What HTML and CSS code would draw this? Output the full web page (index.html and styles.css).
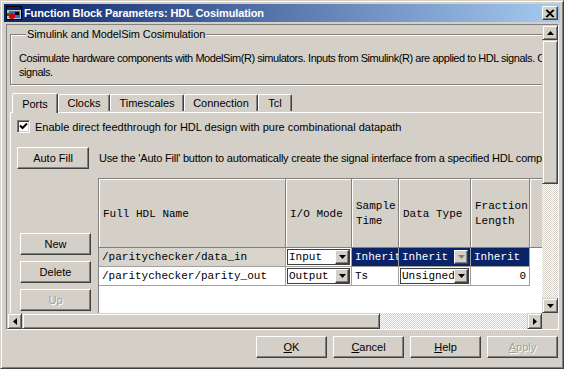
FILE: index.html
```html
<!DOCTYPE html>
<html lang="en">
<head>
    <meta charset="UTF-8">
    <title>Function Block Parameters: HDL Cosimulation</title>
    <link rel="stylesheet" href="styles.css">
</head>
<body>
    <div class="window">
        <div class="titlebar">
            <svg class="app-icon" viewBox="0 0 16 16">
                <rect x="0.5" y="1.5" width="15" height="13" fill="#c0c0c0" stroke="#000"/>
                <rect x="1" y="2" width="14" height="3" fill="#0a246a"/>
                <rect x="3" y="6" width="11" height="7" fill="#2f6fd0"/>
                <rect x="9" y="7" width="4" height="3" fill="#000"/>
                <circle cx="6" cy="11" r="3" fill="#e00000"/>
                <rect x="1" y="8" width="2" height="3" fill="#008000"/>
            </svg>
            <span class="title">Function Block Parameters: HDL Cosimulation</span>
            <div class="close-btn">
                <svg viewBox="0 0 10 9" width="10" height="9"><path d="M1 1 L8 8 M2 1 L9 8 M8 1 L1 8 M9 1 L2 8" stroke="#000" stroke-width="1.1"/></svg>
            </div>
        </div>

        <div class="pane">
            <div class="viewport">
                <div class="content">
                    <fieldset class="group">
                        <legend>Simulink and ModelSim Cosimulation</legend>
                        <p class="desc">Cosimulate hardware components with ModelSim(R) simulators. Inputs from Simulink(R) are applied to HDL signals. C</p>
                        <p class="desc">signals.</p>
                    </fieldset>

                    <div class="tabs">
                        <div class="tab active tab-ports">Ports</div>
                        <div class="tab tab-clocks">Clocks</div>
                        <div class="tab tab-wide">Timescales</div>
                        <div class="tab tab-wide">Connection</div>
                        <div class="tab tab-tcl">Tcl</div>
                    </div>

                    <div class="tab-panel">
                        <label class="check-row">
                            <span class="checkbox">
                                <svg viewBox="0 0 9 9" width="9" height="9"><path d="M1 3.5 L3.5 6 L8 1.5" fill="none" stroke="#000" stroke-width="2"/></svg>
                            </span>
                            Enable direct feedthrough for HDL design with pure combinational datapath
                        </label>

                        <div class="autofill-row">
                            <button class="btn btn-autofill">Auto Fill</button>
                            <span class="hint">Use the 'Auto Fill' button to automatically create the signal interface from a specified HDL component.</span>
                        </div>

                        <div class="ports">
                            <div class="port-buttons">
                                <button class="btn">New</button>
                                <button class="btn">Delete</button>
                                <button class="btn disabled">Up</button>
                            </div>

                            <div class="port-table">
                                <div class="grid">
                                    <div class="hcell">Full HDL Name</div>
                                    <div class="hcell">I/O Mode</div>
                                    <div class="hcell">Sample<br>Time</div>
                                    <div class="hcell">Data Type</div>
                                    <div class="hcell">Fraction<br>Length</div>
                                    <div class="hcell hfill"></div>

                                    <div class="cell cell-gray">/paritychecker/data_in</div>
                                    <div class="cell cell-combo">
                                        <div class="combo"><span>Input</span><i class="drop"><svg viewBox="0 0 7 4" width="7" height="4"><path d="M0 0 H7 L3.5 4 Z"/></svg></i></div>
                                    </div>
                                    <div class="cell selected">Inherit</div>
                                    <div class="cell selected cell-combo">
                                        <div class="combo combo-off"><span>Inherit</span><i class="drop"><svg viewBox="0 0 7 4" width="7" height="4"><path d="M0 0 H7 L3.5 4 Z" fill="#808080"/></svg></i></div>
                                    </div>
                                    <div class="cell selected">Inherit</div>
                                    <div class="cell fill"></div>

                                    <div class="cell">/paritychecker/parity_out</div>
                                    <div class="cell cell-combo">
                                        <div class="combo"><span>Output</span><i class="drop"><svg viewBox="0 0 7 4" width="7" height="4"><path d="M0 0 H7 L3.5 4 Z"/></svg></i></div>
                                    </div>
                                    <div class="cell">Ts</div>
                                    <div class="cell cell-combo">
                                        <div class="combo"><span>Unsigned</span><i class="drop"><svg viewBox="0 0 7 4" width="7" height="4"><path d="M0 0 H7 L3.5 4 Z"/></svg></i></div>
                                    </div>
                                    <div class="cell num">0</div>
                                    <div class="cell fill"></div>
                                </div>
                            </div>
                        </div>
                    </div>
                </div>
            </div>

            <!-- vertical scrollbar -->
            <div class="vscroll">
                <div class="arrow"><svg viewBox="0 0 7 4" width="7" height="4"><path d="M3.5 0 L7 4 H0 Z"/></svg></div>
                <div class="thumb v-thumb"></div>
                <div class="track"></div>
                <div class="arrow"><svg viewBox="0 0 7 4" width="7" height="4"><path d="M0 0 H7 L3.5 4 Z"/></svg></div>
            </div>

            <!-- horizontal scrollbar -->
            <div class="hscroll">
                <div class="arrow"><svg viewBox="0 0 4 7" width="4" height="7"><path d="M4 0 V7 L0 3.5 Z"/></svg></div>
                <div class="thumb h-thumb"></div>
                <div class="track"></div>
                <div class="arrow"><svg viewBox="0 0 4 7" width="4" height="7"><path d="M0 0 V7 L4 3.5 Z"/></svg></div>
            </div>
            <div class="corner"></div>
        </div>

        <div class="actions">
            <button class="btn btn-action"><u>O</u>K</button>
            <button class="btn btn-action"><u>C</u>ancel</button>
            <button class="btn btn-action"><u>H</u>elp</button>
            <button class="btn btn-action disabled"><u>A</u>pply</button>
        </div>
    </div>
</body>
</html>
```

FILE: styles.css
```css
/* Classic Windows dialog */
* {
    box-sizing: border-box;
    margin: 0;
    padding: 0;
}

body {
    font-family: 'Liberation Sans', Arial, sans-serif;
    font-size: 11px;
    color: #000;
    background: #d4d0c8;
}

.window {
    width: 564px;
    height: 369px;
    border: 1px solid;
    border-color: #d4d0c8 #404040 #404040 #d4d0c8;
    box-shadow: inset 1px 1px #fff, inset -1px -1px #808080;
    padding: 3px;
    display: flex;
    flex-direction: column;
    overflow: hidden;
}

/* Title bar */
.titlebar {
    flex: none;
    height: 18px;
    display: flex;
    align-items: center;
    padding: 0 2px;
    background: linear-gradient(to right, #0a246a, #a6caf0);
    color: #fff;
}

.app-icon {
    width: 16px;
    height: 16px;
    margin-right: 2px;
}

.title {
    flex: 1;
    font-weight: bold;
    white-space: nowrap;
    letter-spacing: -0.1px;
}

.close-btn {
    width: 16px;
    height: 14px;
    display: flex;
    align-items: center;
    justify-content: center;
    background: #d4d0c8;
    border: 1px solid;
    border-color: #fff #404040 #404040 #fff;
    box-shadow: inset -1px -1px #808080;
}

/* Scroll pane */
.pane {
    flex: none;
    height: 306px;
    margin: 2px 1px 0 2px;
    border: 1px solid;
    border-color: #808080 #fff #fff #808080;
    display: grid;
    grid-template-columns: 1fr 16px;
    grid-template-rows: 1fr 16px;
}

.viewport {
    overflow: hidden;
}

.content {
    width: 680px;
    padding: 3px 0 0 3px;
}

/* Group box */
.group {
    border: 1px solid #808080;
    box-shadow: 1px 1px 0 #fff, inset 1px 1px 0 #fff;
    padding: 10px 0 5px 8px;
}

.group legend {
    margin-left: 7px;
    padding: 0 1px;
    background: #d4d0c8;
    line-height: 13px;
    letter-spacing: -0.1px;
}

.desc {
    line-height: 14px;
    white-space: nowrap;
    letter-spacing: -0.45px;
}

/* Tabs */
.tabs {
    display: flex;
    align-items: flex-end;
    height: 27px;
    padding-left: 2px;
    position: relative;
    z-index: 1;
}

.tab {
    height: 17px;
    display: flex;
    align-items: center;
    justify-content: center;
    border: 1px solid;
    border-bottom: none;
    border-color: #fff #404040 #404040 #fff;
    box-shadow: inset -1px 0 #808080;
    border-radius: 2px 2px 0 0;
    margin-bottom: 1px;
}

.tab-ports { width: 46px; }
.tab-clocks { width: 52px; }
.tab-wide { width: 74px; }
.tab-tcl { width: 34px; }

.tab.active {
    height: 20px;
    margin-bottom: -1px;
    background: #d4d0c8;
}

.tab-panel {
    border-top: 1px solid #fff;
    border-left: 1px solid #fff;
    padding: 7px 0 0 6px;
}

.check-row {
    display: flex;
    align-items: center;
    height: 13px;
    gap: 5px;
}

.checkbox {
    width: 13px;
    height: 13px;
    display: flex;
    align-items: center;
    justify-content: center;
    background: #fff;
    border: 1px solid;
    border-color: #808080 #fff #fff #808080;
    box-shadow: inset 1px 1px #404040, inset -1px -1px #d4d0c8;
}

/* Buttons */
.btn {
    font: inherit;
    color: #000;
    background: #d4d0c8;
    border: 1px solid;
    border-color: #fff #404040 #404040 #fff;
    box-shadow: inset -1px -1px #808080;
    height: 22px;
    width: 71px;
}

.btn.disabled {
    color: #a0a0a0;
    text-shadow: 1px 1px #fff;
}

.autofill-row {
    display: flex;
    align-items: center;
    gap: 10px;
    margin-top: 14px;
    white-space: nowrap;
}

.btn-autofill {
    width: 72px;
}

.hint {
    letter-spacing: -0.2px;
}

/* Ports table */
.ports {
    display: flex;
    margin-top: 9px;
    gap: 7px;
}

.port-buttons {
    display: flex;
    flex-direction: column;
    gap: 6px;
    padding: 55px 0 0 3px;
}

.port-table {
    width: 450px;
    height: 160px;
    background: #fff;
    border-top: 1px solid #808080;
    border-left: 1px solid #808080;
}

.grid {
    display: grid;
    grid-template-columns: 187px 66px 47px 72px 59px 1fr;
    grid-template-rows: 69px 19px 19px;
    font-family: 'Liberation Mono', 'Courier New', monospace;
    font-size: 11px;
}

.hcell {
    background: #d4d0c8;
    border-right: 1px solid #808080;
    border-bottom: 1px solid #808080;
    box-shadow: inset 1px 1px #fff;
    display: flex;
    align-items: center;
    padding: 2px 4px 0;
    line-height: 15px;
}

.hfill {
    border-right: none;
}

.cell {
    border-right: 1px solid #a0a0a0;
    border-bottom: 1px solid #a0a0a0;
    padding: 0 3px;
    line-height: 18px;
    white-space: nowrap;
    overflow: hidden;
}

.cell-gray {
    background: #d8d4cc;
}

.cell.selected {
    background: #0a246a;
    color: #fff;
}

.cell.num {
    text-align: right;
}

.cell.fill {
    border: none;
}

.cell-combo {
    padding: 1px;
}

.combo {
    height: 16px;
    display: flex;
    background: #fff;
    border: 1px solid #404040;
    line-height: 14px;
}

.combo span {
    flex: 1;
    overflow: hidden;
    padding-left: 1px;
}

.combo-off {
    background: #0a246a;
    border-color: #0a246a;
}

.drop {
    width: 14px;
    flex: none;
    display: flex;
    align-items: center;
    justify-content: center;
    background: #d4d0c8;
    border: 1px solid;
    border-color: #fff #404040 #404040 #fff;
    box-shadow: inset -1px -1px #808080;
}

/* Scrollbars */
.vscroll {
    display: flex;
    flex-direction: column;
}

.hscroll {
    display: flex;
}

.arrow {
    flex: none;
    width: 16px;
    height: 15px;
    display: flex;
    align-items: center;
    justify-content: center;
    background: #d4d0c8;
    border: 1px solid;
    border-color: #d4d0c8 #404040 #404040 #d4d0c8;
    box-shadow: inset 1px 1px #fff, inset -1px -1px #808080;
}

.hscroll .arrow {
    width: 15px;
    height: 16px;
}

.thumb {
    flex: none;
    background: #d4d0c8;
    border: 1px solid;
    border-color: #d4d0c8 #404040 #404040 #d4d0c8;
    box-shadow: inset 1px 1px #fff, inset -1px -1px #808080;
}

.v-thumb { height: 144px; }
.h-thumb { width: 358px; }

.track {
    flex: 1;
    background: repeating-conic-gradient(#fff 0 25%, #d4d0c8 0 50%) 0 0 / 2px 2px;
}

.corner {
    background: #d4d0c8;
}

/* Dialog buttons */
.actions {
    display: flex;
    justify-content: flex-end;
    gap: 6px;
    padding: 6px 2px 0 0;
}

.btn-action u {
    text-decoration: underline;
}
```
